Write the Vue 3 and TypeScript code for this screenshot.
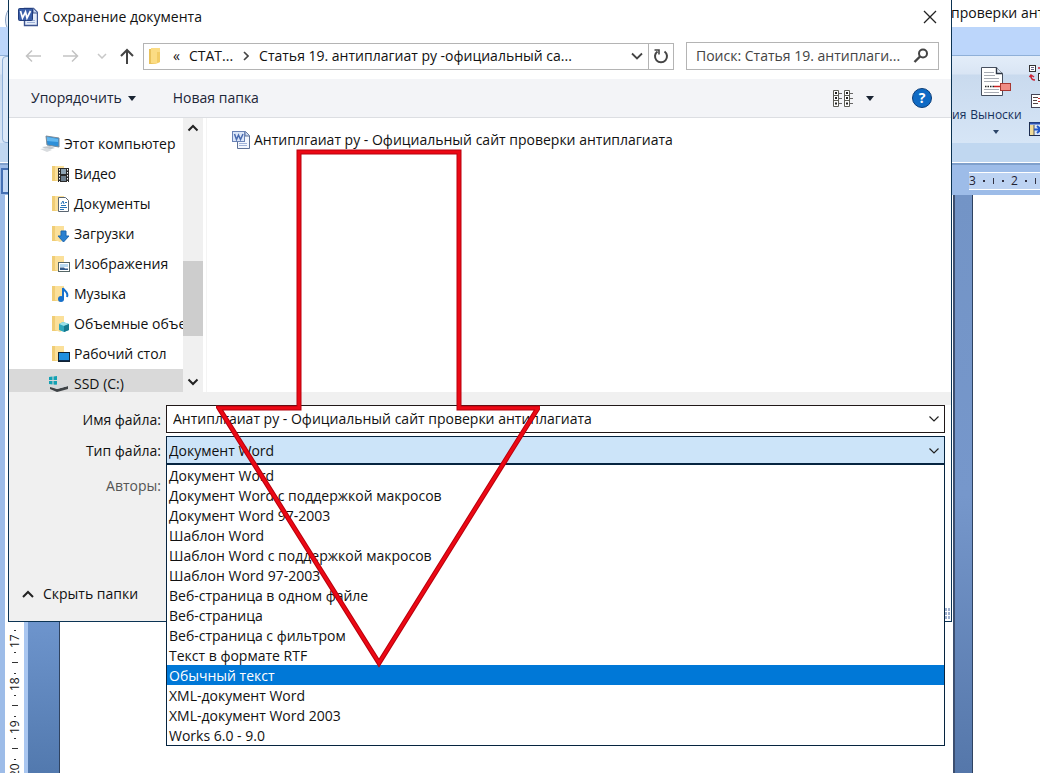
<script setup lang="ts">
import { ref } from 'vue'

interface Place {
  name: string
  kind: string
}

const places: Place[] = [
  { name: 'Видео', kind: 'video' },
  { name: 'Документы', kind: 'docs' },
  { name: 'Загрузки', kind: 'down' },
  { name: 'Изображения', kind: 'pics' },
  { name: 'Музыка', kind: 'music' },
  { name: 'Объемные объекты', kind: 'cube' },
  { name: 'Рабочий стол', kind: 'desk' },
]

const formats: string[] = [
  'Документ Word',
  'Документ Word с поддержкой макросов',
  'Документ Word 97-2003',
  'Шаблон Word',
  'Шаблон Word с поддержкой макросов',
  'Шаблон Word 97-2003',
  'Веб-страница в одном файле',
  'Веб-страница',
  'Веб-страница с фильтром',
  'Текст в формате RTF',
  'Обычный текст',
  'XML-документ Word',
  'XML-документ Word 2003',
  'Works 6.0 - 9.0',
]

const highlighted = ref(10)
const fileType = ref('Документ Word')
const fileName = ref('Антиплгаиат ру - Официальный сайт проверки антиплагиата')
const search = ref('Поиск: Статья 19. антиплаги...')
const rulerMarks: number[] = [17, 18, 19, 20]
</script>

<template>
  <div class="desktop">
    <div class="word">
      <div class="word-title"><span class="orb"></span><span class="word-title-text">проверки ант</span></div>
      <div class="word-tabs"></div>
      <div class="ribbon">
        <div class="ribbon-left"></div>
        <div class="ribbon-group">
          <span class="ribbon-cut">ия</span>
          <button class="ribbon-btn" type="button">
            <svg width="32" height="34" viewBox="0 0 32 34">
              <path d="M1.5 1.5h15l6 6v22h-21z" fill="#fff" stroke="#47505f" />
              <path d="M16.5 1.5v6h6" fill="#dfe8f5" stroke="#2b3442" stroke-width="1.4" />
              <path d="M4 6.500h10M4 9.500h11M4 12.500h15M4 15.500h15M4 23.500h15M4 26.500h15" stroke="#a7abb3" />
              <path d="M5 20.500h10" stroke="#222" stroke-width="1.500" stroke-dasharray="1.500 1" />
              <path d="M14 20.500h7" stroke="#c22" stroke-width="1.500" />
              <rect x="20.500" y="17.500" width="10" height="7" fill="#f08c84" stroke="#a83832" />
            </svg>
            <span>Выноски</span>
            <svg width="6" height="4" viewBox="0 0 6 4"><path d="M0 0h6L3 4z" fill="#2b4468" /></svg>
          </button>
          <div class="ribbon-icons">
            <svg width="18" height="18" viewBox="0 0 18 18">
              <rect x="1.500" y="1.500" width="6" height="6" fill="#fff" stroke="#333" />
              <path d="M3 3.500h3M3 5.500h3" stroke="#668" />
              <path d="M10 4h6M7 16c-3 0-4-1-4-4M1.500 13L3 11l3 2" stroke="#c23" fill="none" stroke-width="1.500" />
              <rect x="10.500" y="9.500" width="7" height="7" fill="#fff" stroke="#333" />
            </svg>
            <svg width="18" height="18" viewBox="0 0 18 18">
              <rect x="3.500" y="2.500" width="14" height="13" fill="#fff" stroke="#445" />
              <path d="M5 5.500h5M5 8.500h4M5 11.500h5" stroke="#544" />
              <path d="M10 6.500h6M10 9.500h6" stroke="#c33" />
            </svg>
            <svg width="18" height="18" viewBox="0 0 18 18">
              <rect x="1.500" y="2.500" width="16" height="13" fill="#dce8fa" stroke="#1c2c50" />
              <path d="M2 3.500h16" stroke="#2a50b0" stroke-width="2" />
              <rect x="2" y="5" width="4" height="10" fill="#f2dc98" />
              <path d="M6 5v10" stroke="#555" />
              <path d="M6 9.500h6M9 6l4 3.500L9 13" fill="none" stroke="#2458c8" stroke-width="2" />
            </svg>
          </div>
        </div>
      </div>
      <div class="ribbon-foot"></div>
      <div class="ruler-h">
        <span class="tab-stop"></span>
        <div class="ruler-h-scale">
          <span>3</span><i class="dot"></i><i class="tick"></i><i class="dot"></i>
          <span>2</span><i class="dot"></i><i class="tick"></i>
        </div>
      </div>
      <div class="doc">
        <div class="ruler-v">
          <template v-for="(n, i) in rulerMarks" :key="n">
            <svg v-if="i > 0" class="marks" width="18" height="29" viewBox="0 0 18 29">
              <path d="M8 4.500h2M8 25.500h2M6 14.500h6" stroke="#333" />
            </svg>
            <svg v-else class="marks" width="18" height="6" viewBox="0 0 18 6">
              <path d="M8 2.500h2" stroke="#333" />
            </svg>
            <span class="v-num">{{ n }}</span>
          </template>
        </div>
        <div class="gutter"></div>
        <div class="page"></div>
        <div class="gutter-right"></div>
        <div class="page-right"></div>
      </div>
    </div>

    <div class="dialog">
      <div class="title">
        <svg width="20" height="20" viewBox="0 0 20 20">
          <path d="M6.500 1.500h9l4 4v13h-13z" fill="#e4ecfa" stroke="#3d5490" stroke-width="1.400" />
          <path d="M15 1.500v4.500h4.500" fill="#c7d6f1" stroke="#3d5490" />
          <path d="M9 13.500h8M9 15.500h8" stroke="#9fb2d8" />
          <rect x="0.500" y="1.500" width="14" height="12" rx="1" fill="#3b5fa9" stroke="#213c7c" />
          <path d="M2.500 4l2 7 3-6 1.500 6 3.500-7" fill="none" stroke="#fff" stroke-width="1.700" />
        </svg>
        <h1>Сохранение документа</h1>
        <button class="close" type="button" aria-label="Закрыть">
          <svg width="14" height="14" viewBox="0 0 14 14"><path d="M1 1l12 12M13 1L1 13" stroke="#222" stroke-width="1.300" /></svg>
        </button>
      </div>

      <div class="nav">
        <button class="plain" type="button" aria-label="Назад">
          <svg width="16" height="14" viewBox="0 0 16 14"><path d="M1 7h15M7 1.500L1.500 7 7 12.500" fill="none" stroke="#c3c3c3" stroke-width="1.500" /></svg>
        </button>
        <button class="plain forward" type="button" aria-label="Вперед">
          <svg width="16" height="14" viewBox="0 0 16 14"><path d="M0 7h15M9 1.500L14.500 7 9 12.500" fill="none" stroke="#c3c3c3" stroke-width="1.500" /></svg>
        </button>
        <button class="plain recent" type="button" aria-label="Последние">
          <svg width="10" height="6" viewBox="0 0 10 6"><path d="M1 1l4 4 4-4" fill="none" stroke="#c8c8c8" stroke-width="1.500" /></svg>
        </button>
        <button class="plain up" type="button" aria-label="Вверх">
          <svg width="14" height="16" viewBox="0 0 14 16"><path d="M7 1.500V16M1 8l6-6 6 6" fill="none" stroke="#444" stroke-width="2" /></svg>
        </button>
        <div class="address">
          <svg width="14" height="18" viewBox="0 0 14 18">
            <path d="M1 2h7v15H1z" fill="#e9c25c" /><path d="M3 1h9v14l-4 2-5-1z" fill="#fbdc84" /><path d="M9 5v11l3-1V5z" fill="#f2cc66" />
          </svg>
          <span class="back">«</span>
          <a href="#">СТАТ...</a>
          <svg class="sep" width="6" height="10" viewBox="0 0 6 10"><path d="M1 1l4 4-4 4" fill="none" stroke="#444" stroke-width="1.600" /></svg>
          <a href="#">Статья 19. антиплагиат ру -официальный са...</a>
          <button class="plain more" type="button" aria-label="История">
            <svg width="12" height="8" viewBox="0 0 12 8"><path d="M1 1.500l5 5 5-5" fill="none" stroke="#444" stroke-width="1.800" /></svg>
          </button>
          <button class="refresh" type="button" aria-label="Обновить">
            <svg width="16" height="16" viewBox="0 0 16 16">
              <path d="M4.500 3.500A6 6 0 1 0 11.500 3.500" fill="none" stroke="#444" stroke-width="2" /><path d="M1.500 2H6v4.500" fill="none" stroke="#444" stroke-width="1.600" />
            </svg>
          </button>
        </div>
        <div class="search">
          <input v-model="search" type="text" aria-label="Поиск" />
          <svg width="16" height="16" viewBox="0 0 16 16">
            <circle cx="10" cy="5.500" r="4" fill="none" stroke="#444" stroke-width="2" /><path d="M7 8.500L1.500 14" stroke="#444" stroke-width="2.400" />
          </svg>
        </div>
      </div>

      <div class="tools">
        <button class="plain arrange" type="button">Упорядочить
          <svg width="8" height="5" viewBox="0 0 8 5"><path d="M0 0h8L4 5z" fill="#1a2433" /></svg>
        </button>
        <button class="plain" type="button">Новая папка</button>
        <button class="plain view" type="button" aria-label="Вид">
          <svg width="21" height="17" viewBox="0 0 21 17">
            <path d="M.5.500h5v16h-5zM.5 5.500h5M.5 10.500h5M11.500.500h5v16h-5zM11.500 5.500h5M11.500 10.500h5" fill="#fff" stroke="#5c5c54" />
            <path d="M2 3h2M2 8h2M2 13.500h2M13 3h2M13 8h2M13 13.500h2" stroke="#222" stroke-width="2" />
            <path d="M6 3.500h3M6 8.500h3M6 13.500h3M17 3.500h3M17 8.500h3M17 13.500h3" stroke="#666" />
          </svg>
          <svg width="8" height="5" viewBox="0 0 8 5"><path d="M0 0h8L4 5z" fill="#1a2433" /></svg>
        </button>
        <button class="help" type="button" aria-label="Справка">?</button>
      </div>

      <div class="body">
        <div class="tree">
          <button class="node root" type="button">
            <svg width="20" height="18" viewBox="0 0 20 18">
              <path d="M6 1l13 2v9L7 10z" fill="#2e8fd8" stroke="#7c8b98" />
              <path d="M7 2l11 2v3L7 6z" fill="#62b7ef" />
              <path d="M2 12l8-1 5 2-7 2z" fill="#c2c7cc" /><path d="M0 14l7-1 5 2-5 2z" fill="#d9dcdf" />
            </svg>
            Этот компьютер
          </button>
          <button v-for="p in places" :key="p.name" class="node" type="button">
            <svg width="18" height="18" viewBox="0 0 18 18">
              <path d="M0 1h7v15H0z" fill="#f0cd76" /><path d="M3 1h9v14l-4 2-5-2z" fill="#fbe09a" />
              <g v-if="p.kind === 'video'">
                <rect x="6" y="3" width="11" height="14" fill="#2a2a2a" /><rect x="9" y="4" width="5" height="5" fill="#8ea4b4" /><rect x="9" y="11" width="5" height="5" fill="#6d7f8e" />
                <path d="M7.500 4v13M15.500 4v13" stroke="#fff" stroke-dasharray="1.500 1.500" />
              </g>
              <g v-else-if="p.kind === 'docs'">
                <path d="M6.500 2.500h7l3 3v11h-10z" fill="#fff" stroke="#5b6672" /><path d="M9 9l2-3 1 3M9 10.500h5M8 12.500h7M8 14.500h4M13 7.500h2" stroke="#2673b8" fill="none" />
              </g>
              <path v-else-if="p.kind === 'down'" d="M9 6h5v5h3l-5.500 6L6 11h3z" fill="#2a80d0" stroke="#1c66b0" />
              <g v-else-if="p.kind === 'pics'">
                <rect x="6.500" y="7.500" width="11" height="9" fill="#fff" stroke="#566" /><rect x="8" y="9" width="8" height="3" fill="#b8d8ef" /><path d="M8 12.500h4l1 1h3V15H8z" fill="#345c8c" />
              </g>
              <g v-else-if="p.kind === 'music'">
                <path d="M11 14.500V3c1 3 6 4 4 9" fill="none" stroke="#1670cc" stroke-width="2" /><circle cx="9" cy="14" r="3" fill="#1670cc" />
              </g>
              <g v-else-if="p.kind === 'cube'">
                <path d="M11 7l6 2v6l-5 2-5-2V9z" fill="#2fa6bb" /><path d="M11 7l6 2-5 2-5-2z" fill="#9be0e8" /><path d="M12 11l5-2v6l-5 2z" fill="#16788e" />
              </g>
              <g v-else>
                <rect x="6.500" y="7.500" width="11" height="9" fill="#1f8fe0" stroke="#123" /><path d="M7 15.500h10" stroke="#0b2c50" />
              </g>
            </svg>
            {{ p.name }}
          </button>
          <button class="node drive" type="button">
            <svg width="20" height="18" viewBox="0 0 20 18">
              <path d="M1 2l3.500-.500V5H1zM5.500 1.500L9 1v4H5.500zM1 6h3.500v3.500L1 9zM5.500 6H9v4l-3.500-.500z" fill="#13a1b4" />
              <path d="M2 12l7 2 11-3v3l-11 3-7-3z" fill="#3f4346" /><path d="M3 11l8-2 9 2-11 3z" fill="#d4d7da" />
            </svg>
            SSD (C:)
          </button>
        </div>
        <div class="scroll">
          <svg width="12" height="8" viewBox="0 0 12 8"><path d="M1.500 6.500L6 2l4.500 4.500" fill="none" stroke="#222" stroke-width="2" /></svg>
          <div class="thumb"></div>
          <svg width="12" height="8" viewBox="0 0 12 8"><path d="M1.500 1.500L6 6l4.500-4.500" fill="none" stroke="#222" stroke-width="2" /></svg>
        </div>
        <div class="files">
          <button class="file" type="button">
            <svg width="20" height="20" viewBox="0 0 20 20">
              <path d="M6.500 1.500h8l4 4v13h-12z" fill="#f2f6fd" stroke="#5d7197" />
              <path d="M14 1.500V6h4.500" fill="#c7d6f1" stroke="#5d7197" />
              <path d="M8 13.500h8M8 15.500h8" stroke="#9fb2d8" />
              <rect x="1.500" y="1.500" width="12" height="10" fill="#dbe6f8" stroke="#6a83b6" />
              <path d="M3.500 4l2 5.500L7.500 5l2 4.500L12 4" fill="none" stroke="#4a6bb0" stroke-width="1.500" />
            </svg>
            {{ fileName }}
          </button>
        </div>
      </div>

      <div class="footer">
        <div class="labels">
          <label for="fname">Имя файла:</label>
          <label for="ftype">Тип файла:</label>
          <span class="authors">Авторы:</span>
          <button class="plain hide" type="button">
            <svg width="12" height="8" viewBox="0 0 12 8"><path d="M1 7l5-5 5 5" fill="none" stroke="#222" stroke-width="2" /></svg>
            Скрыть папки
          </button>
        </div>
        <div class="fields">
          <div class="field">
            <input id="fname" v-model="fileName" type="text" />
            <svg width="10" height="6" viewBox="0 0 10 6"><path d="M.5.500L5 5 9.500.500" fill="none" stroke="#222" stroke-width="1.200" /></svg>
          </div>
          <div class="field type">
            <select id="ftype" v-model="fileType">
              <option v-for="f in formats" :key="f">{{ f }}</option>
            </select>
            <svg width="10" height="6" viewBox="0 0 10 6"><path d="M.5.500L5 5 9.500.500" fill="none" stroke="#222" stroke-width="1.200" /></svg>
            <ul class="list" role="listbox" aria-label="Тип файла">
              <li
                v-for="(f, i) in formats"
                :key="f"
                role="option"
                :aria-selected="i === highlighted"
                :class="{ on: i === highlighted }"
                @mouseenter="highlighted = i"
                @click="fileType = f"
              >{{ f }}</li>
            </ul>
          </div>
        </div>
      </div>
      <svg class="grip" width="6" height="12" viewBox="0 0 6 12"><path d="M0 1.500h5M0 5.500h5M0 9.500h5" stroke="#9fb0cf" stroke-width="3" stroke-dasharray="2 1" /></svg>
    </div>

    <svg class="arrow" width="324" height="520" viewBox="0 0 324 520">
      <path d="M83 4h160v256h79L163 515 3 260h80z" fill="none" stroke="#b8000c" stroke-width="5" />
      <path d="M83 4h160v256h79L163 515 3 260h80z" fill="none" stroke="#ec0814" stroke-width="3" />
    </svg>
  </div>
</template>

<style>
body {
  margin: 0;
}
</style>

<style scoped>
.desktop {
  position: relative;
  min-height: 100vh;
  overflow: hidden;
  display: flex;
  font-family: 'Open Sans', 'Noto Sans', sans-serif;
  font-size: 14px;
  line-height: 20px;
  color: #111;
}
.desktop * {
  box-sizing: border-box;
}
button,
input,
select {
  font: inherit;
  color: inherit;
  margin: 0;
  padding: 0;
  border: 0;
  background: none;
}
svg {
  flex: none;
  display: block;
}
.word {
  flex: 1;
  display: flex;
  flex-direction: column;
  min-width: 0;
  background: #fff;
}
.word-title {
  height: 27px;
  display: flex;
  justify-content: space-between;
}
.orb {
  width: 40px;
  height: 40px;
  margin-left: 5px;
  border: 1px solid #8ba3c4;
  border-radius: 50%;
  background: #e6eefa;
}
.word-title-text {
  width: 89px;
  padding-top: 3px;
  overflow: hidden;
  white-space: nowrap;
}
.word-tabs {
  height: 28px;
  background: #bcd6fb;
}
.ribbon {
  height: 88px;
  display: flex;
  justify-content: space-between;
  border-top: 1px solid #8fb0d8;
  background: linear-gradient(#e3edf9, #d9e5f4 18px, #c9daee 19px, #d6e5f6);
}
.ribbon-left {
  width: 20px;
  margin-left: 2px;
  border: 1px solid #8fb0d8;
  border-radius: 4px;
  background: #dce9f8;
}
.ribbon-group {
  width: 88px;
  display: flex;
  font-size: 12px;
  color: #15305c;
  overflow: hidden;
}
.ribbon-cut {
  width: 15px;
  padding-top: 49px;
}
.ribbon-btn {
  width: 58px;
  display: flex;
  flex-direction: column;
  align-items: center;
  padding-top: 10px;
  gap: 5px;
}
.ribbon-icons {
  flex: 1;
  min-width: 0;
  padding: 8px 0 0 3px;
  display: flex;
  flex-direction: column;
  gap: 10px;
}
.ribbon-foot {
  height: 22px;
  background: #c0d7f0;
  border-bottom: 2px solid #7fa0cc;
  box-shadow: inset 0 -1px #fff;
}
.ruler-h {
  height: 30px;
  display: flex;
  justify-content: space-between;
  background: #9dbce8;
}
.tab-stop {
  width: 22px;
  height: 26px;
  margin: 3px 0 0 1px;
  border: 2px solid #4470b4;
  background: #c4d9f5;
}
.ruler-h-scale {
  width: 71px;
  height: 18px;
  margin-top: 7px;
  display: flex;
  align-items: center;
  gap: 6px;
  overflow: hidden;
  border-top: 1px solid #fff;
  border-bottom: 1px solid #fff;
  background: #bdd3f2;
  font-size: 12px;
  color: #223;
}
.ruler-h-scale > * {
  flex: none;
}
.dot {
  width: 2px;
  height: 2px;
  margin: 0 1px;
  background: #334;
}
.tick {
  width: 1px;
  height: 6px;
  margin: 0 1px;
  background: #334;
}
.doc {
  flex: 1;
  display: flex;
}
.ruler-v {
  width: 28px;
  display: flex;
  flex-direction: column;
  justify-content: flex-end;
  align-items: center;
  padding: 0 3px 0 4px;
  border-left: 5px solid #9dbce8;
  border-right: 4px solid #a9c6f0;
  background: #fff;
}
.v-num {
  flex: none;
  width: 18px;
  height: 14px;
  font-size: 12px;
  line-height: 18px;
  writing-mode: vertical-rl;
  transform: rotate(180deg);
}
.v-num:last-child {
  margin-bottom: -4px;
}
.gutter {
  width: 32px;
  border-right: 1px solid #2f4361;
  background: linear-gradient(#86a8dc, #6d94cc 430px, #5279ae);
}
.page {
  flex: 1;
}
.gutter-right {
  width: 20px;
  border-left: 2px solid #3c4f70;
  border-right: 1px solid #2f4361;
  background: linear-gradient(#7394c6, #7697cb 300px, #5577aa);
}
.page-right {
  width: 67px;
}
.dialog {
  position: absolute;
  top: 0;
  left: 8px;
  right: 88px;
  display: flex;
  flex-direction: column;
  border: 1px solid #0b3354;
  border-top: 0;
  background: #fff;
}
.plain {
  display: flex;
  align-items: center;
}
.title {
  height: 33px;
  display: flex;
  align-items: center;
  padding: 0 14px 0 9px;
  gap: 5px;
}
.title h1 {
  flex: 1;
  margin: 0;
  font-size: 14px;
  font-weight: 400;
}
.nav {
  height: 46px;
  display: flex;
  align-items: center;
  padding: 0 12px 0 16px;
}
.forward {
  margin-left: 22px;
}
.recent {
  margin-left: 18px;
}
.up {
  margin: 0 9px 0 13px;
}
.address {
  flex: 1;
  min-width: 0;
  height: 27px;
  display: flex;
  align-items: center;
  padding-left: 4px;
  border: 1px solid #b4b4b4;
  white-space: nowrap;
}
.address a {
  color: inherit;
  text-decoration: none;
}
.back {
  margin: 0 9px 0 11px;
}
.sep {
  margin: 0 10px;
}
.more {
  margin: 0 5px 0 auto;
}
.refresh {
  width: 25px;
  height: 25px;
  display: flex;
  align-items: center;
  justify-content: center;
  border-left: 1px solid #b4b4b4;
}
.search {
  width: 253px;
  height: 28px;
  margin-left: 12px;
  padding: 0 9px;
  display: flex;
  align-items: center;
  border: 1px solid #b4b4b4;
}
.search input {
  flex: 1;
  min-width: 0;
  color: #444;
}
.tools {
  height: 39px;
  display: flex;
  align-items: center;
  padding: 0 19px 0 22px;
  border-bottom: 1px solid #dcdee2;
  background: #f3f4f7;
  color: #1c2638;
}
.arrange {
  gap: 6px;
  margin-right: 37px;
}
.view {
  margin-left: auto;
  gap: 12px;
}
.help {
  width: 20px;
  height: 20px;
  margin-left: 38px;
  border: 1px solid #0a3c78;
  border-radius: 50%;
  background: #0f6ac4;
  color: #fff;
  font-weight: 700;
  line-height: 18px;
}
.body {
  height: 274px;
  display: flex;
}
.tree {
  width: 174px;
  padding-top: 11px;
  overflow: hidden;
}
.node {
  width: 100%;
  height: 30px;
  display: flex;
  align-items: center;
  gap: 4px;
  padding-left: 43px;
  white-space: nowrap;
}
.root {
  padding-left: 31px;
}
.drive {
  padding-left: 39px;
  gap: 6px;
  background: #d9d9d9;
}
.scroll {
  width: 20px;
  display: flex;
  flex-direction: column;
  align-items: center;
  justify-content: space-between;
  padding: 6px 0;
  background: #f0f0f0;
}
.thumb {
  width: 20px;
  height: 75px;
  margin-top: 86px;
  background: #cdcdcd;
}
.files {
  flex: 1;
  margin-left: 3px;
  padding: 12px 0 0 24px;
  border-left: 1px solid #f4f4f4;
}
.file {
  display: flex;
  align-items: center;
  gap: 3px;
}
.footer {
  display: flex;
  padding-right: 6px;
  border-top: 13px solid #f0f0f0;
}
.labels {
  width: 157px;
  display: flex;
  flex-direction: column;
  align-items: flex-end;
  padding-right: 5px;
  background: #f0f0f0;
}
.labels label {
  height: 31px;
  padding-top: 5px;
}
.authors {
  margin-top: 9px;
  color: #555;
}
.hide {
  align-self: flex-start;
  gap: 9px;
  margin: 88px 0 17px 13px;
}
.fields {
  flex: 1;
  display: flex;
  flex-direction: column;
  gap: 3px;
}
.field {
  position: relative;
  height: 28px;
  display: flex;
  align-items: center;
  padding: 0 5px 0 6px;
  border: 1px solid #201818;
  background: #fff;
}
.field input,
.field select {
  flex: 1;
  min-width: 0;
  height: 20px;
  appearance: none;
  outline: 0;
}
.type {
  padding-top: 1px;
  padding-left: 2px;
  border-color: #062440;
  background: #cce4f9;
}
.list {
  position: absolute;
  z-index: 2;
  top: 27px;
  left: -1px;
  right: -1px;
  margin: 0;
  padding: 0;
  list-style: none;
  border: 1px solid #062440;
  background: #fff;
}
.list li {
  height: 20px;
  padding-left: 2px;
  line-height: 22px;
}
.list .on {
  background: #0078d7;
  color: #fff;
}
.grip {
  position: absolute;
  right: 0;
  bottom: 1px;
}
.arrow {
  position: absolute;
  z-index: 5;
  top: 148px;
  left: 216px;
  pointer-events: none;
}
</style>
